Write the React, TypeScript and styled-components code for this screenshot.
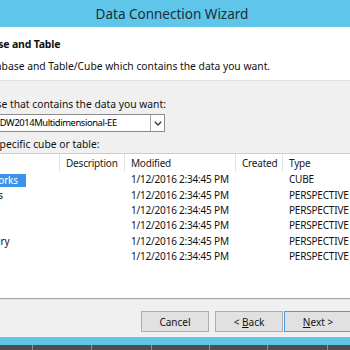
import React from "react";
import styled, { createGlobalStyle } from "styled-components";

const Global = createGlobalStyle`
  *, *::before, *::after { box-sizing: border-box; }
  html, body { margin: 0; padding: 0; background: #f0f0f0; overflow: hidden; }
  body { font-family: "Noto Sans", "Open Sans", sans-serif; }
`;

const Window = styled.div`
  width: 350px;
  height: 350px;
  overflow: hidden;
  display: flex;
  flex-direction: column;
  background: #f0f0f0;
  color: #111;
  font-family: "Noto Sans", "Open Sans", sans-serif;
  font-size: 10.3px;
  letter-spacing: 0;
`;

const TitleBar = styled.div`
  flex: 0 0 27px;
  background: #5fc6ea;
  display: flex;
  align-items: center;
  justify-content: center;
  padding-right: 6px;
  font-size: 13.5px;
  color: #1c2e38;
`;

const Header = styled.div`
  flex: 0 0 54px;
  background: #fff;
  border-bottom: 1px solid #dde3e8;
  padding-top: 10px;
`;

const Shifted = styled.div<{ $shift: number }>`
  margin-left: ${(p) => -p.$shift}px;
  white-space: nowrap;
`;

const HeaderTitle = styled(Shifted)`
  font-weight: 700;
  font-size: 10.5px;
  letter-spacing: -0.2px;
  line-height: 14px;
`;

const HeaderDesc = styled(Shifted)`
  margin-top: 8px;
  line-height: 14px;
`;

const Body = styled.div`
  flex: 1;
  display: flex;
  flex-direction: column;
  padding-top: 17px;
  min-height: 0;
`;

const Label = styled(Shifted)`
  line-height: 13px;
`;

const SelectBox = styled.div<{ $shift: number }>`
  margin-left: ${(p) => -p.$shift}px;
  margin-top: 3px;
  width: ${(p) => 165 + p.$shift}px;
  height: 18px;
  background: #fff;
  border: 1px solid #8a8a8a;
  display: flex;
  align-items: stretch;
`;

const SelectText = styled.div`
  flex: 1;
  padding-left: 3px;
  line-height: 16px;
  font-size: 9.4px;
  letter-spacing: -0.4px;
  white-space: nowrap;
  overflow: hidden;
  color: #000;
`;

const ArrowBox = styled.div`
  flex: 0 0 14px;
  border-left: 1px solid #a8a8a8;
  display: flex;
  align-items: center;
  justify-content: center;
`;

const CheckRow = styled(Shifted)`
  margin-top: 6px;
  display: flex;
  align-items: center;
  gap: 3px;
  line-height: 13px;
`;

const CheckBox = styled.span`
  width: 13px;
  height: 13px;
  border: 1px solid #333;
  background: #fff;
  display: inline-flex;
  align-items: center;
  justify-content: center;
`;

const List = styled.div<{ $shift: number }>`
  margin-top: 2px;
  margin-left: ${(p) => -p.$shift}px;
  width: ${(p) => 430 + p.$shift}px;
  flex: 1;
  background: #fff;
  border-top: 1px solid #cdcdcd;
  font-size: 10px;
  letter-spacing: -0.2px;
`;

const GridRow = styled.div<{ $h: number; $first: number }>`
  display: grid;
  grid-template-columns: ${(p) => p.$first}px 65px 111px 47px 1fr;
  height: ${(p) => p.$h}px;
  align-items: center;
  white-space: nowrap;
`;

const HeadCell = styled.div<{ $sep?: boolean }>`
  height: 100%;
  display: flex;
  align-items: center;
  padding-left: 6px;
  line-height: 13px;
  color: #1a1a1a;
  border-left: ${(p) => (p.$sep ? "1px solid #e3e3e3" : "none")};
  margin-left: ${(p) => (p.$sep ? "-1px" : "0")};
`;

const Cell = styled.div`
  padding-left: 6px;
  line-height: 13px;
  color: #111;
`;

const NameCell = styled.div`
  padding-left: 3px;
`;

const NameText = styled.span<{ $selected?: boolean }>`
  display: inline-block;
  line-height: 13px;
  padding: 0 8px 0 2px;
  background: ${(p) => (p.$selected ? "#3a92ea" : "transparent")};
  color: ${(p) => (p.$selected ? "#fff" : "#111")};
`;

const Footer = styled.div`
  flex: 0 0 39px;
  border-top: 1px solid #a3a3a3;
  box-shadow: inset 0 1px 0 #e2e2e2;
  padding-top: 12px;
  padding-left: 141px;
  display: flex;
  align-items: flex-start;
`;

const Button = styled.div<{ $default?: boolean; $gap: number }>`
  flex: 0 0 68px;
  height: 21px;
  margin-right: ${(p) => p.$gap}px;
  border: 1px solid ${(p) => (p.$default ? "#4a9ae6" : "#adadad")};
  background: #e1e1e1;
  display: flex;
  align-items: center;
  justify-content: center;
  color: #111;
  font-size: 10px;
`;

const Key = styled.span`
  text-decoration: underline;
`;

const BlueStrip = styled.div`
  flex: 0 0 8px;
  background: #5fc6ea;
`;

const TaskStrip = styled.div`
  flex: 0 0 5px;
  display: flex;
  background: #4e4e4e;
`;

const TaskCell = styled.div<{ $w: number }>`
  flex: 0 0 ${(p) => p.$w}px;
  border-right: 1px solid #8e8e8e;
`;

const rows = [
  { name: "Adventure Works", type: "CUBE", selected: true },
  { name: "Channel Sales", type: "PERSPECTIVE" },
  { name: "Direct Sales", type: "PERSPECTIVE" },
  { name: "Finance", type: "PERSPECTIVE" },
  { name: "Sales Summary", type: "PERSPECTIVE" },
  { name: "Sales Targets", type: "PERSPECTIVE" },
];

const LIST_SHIFT = 65;
const NAME_COL = LIST_SHIFT + 60;

export default function App() {
  return (
    <>
      <Global />
      <Window>
        <TitleBar>Data Connection Wizard</TitleBar>
        <Header>
          <HeaderTitle $shift={71}>Select Database and Table</HeaderTitle>
          <HeaderDesc $shift={71}>
            Select the Database and Table/Cube which contains the data you want.
          </HeaderDesc>
        </Header>
        <Body>
          <Label $shift={87}>Select the database that contains the data you want:</Label>
          <SelectBox $shift={72}>
            <SelectText>AdventureWorksDW2014Multidimensional-EE</SelectText>
            <ArrowBox>
              <svg width="8" height="5" viewBox="0 0 8 5">
                <polyline points="0.8,0.8 4,4 7.2,0.8" fill="none" stroke="#333" strokeWidth="1.3" />
              </svg>
            </ArrowBox>
          </SelectBox>
          <CheckRow $shift={85}>
            <CheckBox>
              <svg width="9" height="8" viewBox="0 0 9 8">
                <polyline points="1,4 3.5,6.5 8,1" fill="none" stroke="#222" strokeWidth="1.4" />
              </svg>
            </CheckBox>
            Connect to a specific cube or table:
          </CheckRow>
          <List $shift={LIST_SHIFT}>
            <GridRow $h={18} $first={NAME_COL}>
              <HeadCell>Name</HeadCell>
              <HeadCell $sep>Description</HeadCell>
              <HeadCell $sep>Modified</HeadCell>
              <HeadCell $sep>Created</HeadCell>
              <HeadCell $sep>Type</HeadCell>
            </GridRow>
            {rows.map((r) => (
              <GridRow $h={15.4} $first={NAME_COL} key={r.name}>
                <NameCell>
                  <NameText $selected={r.selected}>{r.name}</NameText>
                </NameCell>
                <Cell />
                <Cell>1/12/2016 2:34:45 PM</Cell>
                <Cell />
                <Cell>{r.type}</Cell>
              </GridRow>
            ))}
          </List>
        </Body>
        <Footer>
          <Button $gap={6}>Cancel</Button>
          <Button $gap={1}>
            &lt;&nbsp;<Key>B</Key>ack
          </Button>
          <Button $gap={0} $default>
            <Key>N</Key>ext&nbsp;&gt;
          </Button>
        </Footer>
        <BlueStrip />
        <TaskStrip>
          <TaskCell $w={33} />
          <TaskCell $w={59} />
          <TaskCell $w={60} />
          <TaskCell $w={58} />
          <TaskCell $w={58} />
          <TaskCell $w={60} />
          <TaskCell $w={60} />
        </TaskStrip>
      </Window>
    </>
  );
}
